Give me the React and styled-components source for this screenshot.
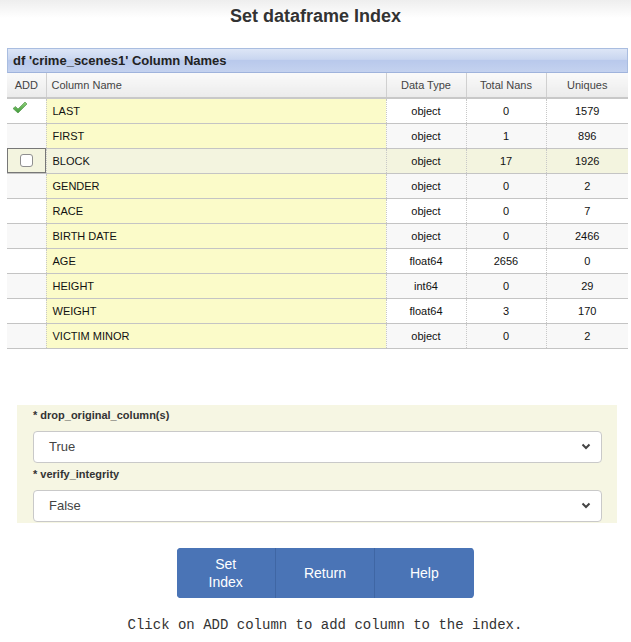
import React from "react";
import styled, { createGlobalStyle } from "styled-components";

const Global = createGlobalStyle`
  html, body { margin: 0; padding: 0; background: #fff; }
  body { font-family: "Liberation Sans", Arial, sans-serif; color: #333; }
`;

const Page = styled.div`
  width: 631px;
  min-height: 642px;
  background: linear-gradient(to bottom, #eeeeee 0px, #ffffff 18px);
  display: flex;
  flex-direction: column;
  align-items: center;
`;

const Title = styled.h1`
  margin: 5px 0 0;
  height: 22px;
  font-size: 18px;
  font-weight: bold;
  color: #333;
  line-height: 22px;
`;

const TableWrap = styled.div`
  margin-top: 21px;
  width: 621px;
  align-self: flex-start;
  margin-left: 7px;
`;

const Caption = styled.div`
  height: 25px;
  box-sizing: border-box;
  border: 1px solid #a9bde0;
  border-bottom: 1px solid #9fb3dc;
  background: linear-gradient(to bottom, #dde6f6 0%, #c9d6f0 45%, #b9c9ec 50%, #c4d2ef 100%);
  font-size: 13px;
  font-weight: bold;
  color: #222;
  padding-left: 5px;
  line-height: 23px;
`;

const Table = styled.table`
  border-collapse: collapse;
  width: 621px;
  table-layout: fixed;
  font-size: 11px;
`;

const Th = styled.th`
  height: 25px;
  padding: 0 0 0 ${(p) => (p.$left ? "5px" : "0")};
  text-align: ${(p) => (p.$left ? "left" : "center")};
  font-weight: normal;
  color: #444;
  background: linear-gradient(to bottom, #fafafa 0%, #ebebeb 100%);
  border-right: 1px solid #d0d0d0;
  border-bottom: 2px solid #c8c8c8;
  box-sizing: border-box;
  &:last-child { border-right: none; }
`;

const Tr = styled.tr`
  height: 25px;
  background: ${(p) => (p.$hover ? "#f3f4df" : p.$alt ? "#f8f8f8" : "#ffffff")};
`;

const Td = styled.td`
  height: 25px;
  padding: 0;
  text-align: center;
  color: #111;
  border-bottom: 1px solid #c4c4c4;
  border-right: 1px dotted #c8c8c8;
  box-sizing: border-box;
  &:last-child { border-right: none; }
`;

const NameTd = styled(Td)`
  text-align: left;
  padding-left: 6px;
  background: ${(p) => (p.$hover ? "#f3f4df" : "#fbfbc9")};
`;

const AddTd = styled(Td)`
  ${(p) => (p.$hover ? "outline: 1px solid #777; outline-offset: -1px;" : "")}
`;

const Box = styled.span`
  display: inline-block;
  width: 11px;
  height: 11px;
  border: 1px solid #8f8f8f;
  border-radius: 3px;
  background: #fff;
  vertical-align: middle;
`;

const Spacer = styled.div`
  height: 56px;
`;

const FormPanel = styled.div`
  width: 600px;
  box-sizing: border-box;
  background: #f6f6e3;
  padding: 3px 15px 0 16px;
  height: 118px;
  margin-left: 3px;
`;

const Label = styled.div`
  font-size: 11px;
  font-weight: bold;
  color: #333;
  height: 14px;
  line-height: 14px;
  margin-top: ${(p) => p.$mt || 0}px;
`;

const Select = styled.div`
  margin-top: ${(p) => p.$mt || 0}px;
  height: 32px;
  box-sizing: border-box;
  border: 1px solid #c9c9c9;
  border-radius: 4px;
  background: #fff;
  display: flex;
  align-items: center;
  justify-content: space-between;
  padding: 0 10px 0 15px;
  font-size: 13px;
  color: #444;
`;

const Bottom = styled.div`
  display: flex;
  flex-direction: column;
  align-items: center;
  padding-left: 19px;
`;

const Buttons = styled.div`
  margin-top: 25px;
  display: flex;
  width: 297px;
  height: 50px;
  border-radius: 4px;
  overflow: hidden;
  background: #4a74b6;
`;

const Btn = styled.button`
  flex: 1 1 0;
  min-width: 0;
  border: none;
  border-right: 1px solid #3f66a4;
  background: #4a74b6;
  color: #fff;
  font-family: "Liberation Sans", Arial, sans-serif;
  font-size: 14px;
  line-height: 18px;
  padding: 0 20px;
  &:last-child { border-right: none; }
`;

const Footer = styled.div`
  margin-top: 19px;
  font-family: "Liberation Mono", "Courier New", monospace;
  font-size: 14px;
  line-height: 16px;
  color: #333;
`;

const rows = [
  ["LAST", "object", "0", "1579"],
  ["FIRST", "object", "1", "896"],
  ["BLOCK", "object", "17", "1926"],
  ["GENDER", "object", "0", "2"],
  ["RACE", "object", "0", "7"],
  ["BIRTH DATE", "object", "0", "2466"],
  ["AGE", "float64", "2656", "0"],
  ["HEIGHT", "int64", "0", "29"],
  ["WEIGHT", "float64", "3", "170"],
  ["VICTIM MINOR", "object", "0", "2"],
];

const Check = () => (
  <svg width="16" height="14" viewBox="0 0 16 14" style={{ display: "block", margin: "-5px 0 0 5px" }}>
    <defs>
      <linearGradient id="cg" x1="0" y1="0" x2="0" y2="1">
        <stop offset="0" stopColor="#8fd07a" />
        <stop offset="1" stopColor="#3f9a3a" />
      </linearGradient>
    </defs>
    <path d="M1 7.5 L3.5 5.5 L6 8 L13 1 L15 3 L6 12 Z" fill="url(#cg)" stroke="#4a8f3f" strokeWidth="0.6" strokeLinejoin="round" />
  </svg>
);

const Chevron = () => (
  <svg width="10" height="7" viewBox="0 0 10 7">
    <path d="M1.5 1.5 L5 5 L8.5 1.5" fill="none" stroke="#444" strokeWidth="2" />
  </svg>
);

export default function App() {
  return (
    <Page>
      <Global />
      <Title>Set dataframe Index</Title>
      <TableWrap>
        <Caption>df 'crime_scenes1' Column Names</Caption>
        <Table>
          <colgroup>
            <col style={{ width: 39 }} />
            <col style={{ width: 340 }} />
            <col style={{ width: 80 }} />
            <col style={{ width: 80 }} />
            <col style={{ width: 82 }} />
          </colgroup>
          <thead>
            <tr>
              <Th>ADD</Th>
              <Th $left>Column Name</Th>
              <Th>Data Type</Th>
              <Th>Total Nans</Th>
              <Th>Uniques</Th>
            </tr>
          </thead>
          <tbody>
            {rows.map((r, i) => {
              const hover = i === 2;
              return (
                <Tr key={r[0]} $alt={i % 2 === 1} $hover={hover}>
                  <AddTd $hover={hover}>
                    {i === 0 ? <Check /> : hover ? <Box /> : null}
                  </AddTd>
                  <NameTd $hover={hover}>{r[0]}</NameTd>
                  <Td>{r[1]}</Td>
                  <Td>{r[2]}</Td>
                  <Td>{r[3]}</Td>
                </Tr>
              );
            })}
          </tbody>
        </Table>
      </TableWrap>
      <Spacer />
      <FormPanel>
        <Label>* drop_original_column(s)</Label>
        <Select $mt={9}>
          <span>True</span>
          <Chevron />
        </Select>
        <Label $mt={4}>* verify_integrity</Label>
        <Select $mt={9}>
          <span>False</span>
          <Chevron />
        </Select>
      </FormPanel>
      <Bottom>
        <Buttons>
          <Btn>Set Index</Btn>
          <Btn>Return</Btn>
          <Btn>Help</Btn>
        </Buttons>
        <Footer>Click on ADD column to add column to the index.</Footer>
      </Bottom>
    </Page>
  );
}
